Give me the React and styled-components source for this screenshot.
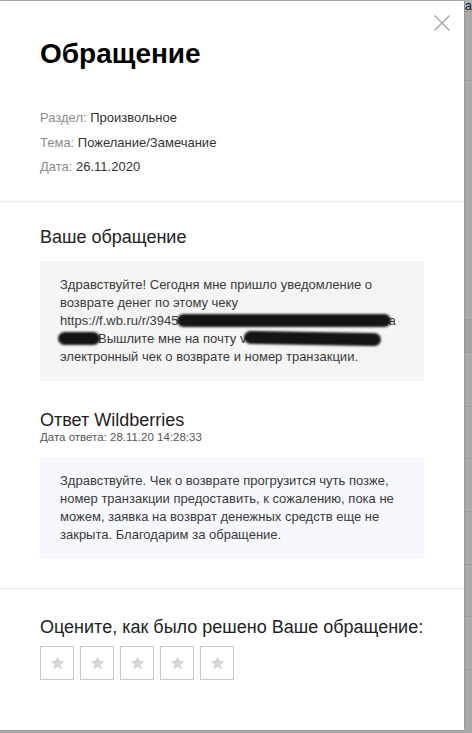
import styled, { createGlobalStyle } from 'styled-components'

const GlobalStyle = createGlobalStyle`
    html, body {
        margin: 0;
        padding: 0;
        overflow: hidden;
    }
    body {
        font-family: 'Liberation Sans', Arial, sans-serif;
        background: #a9a9a9;
    }
`

const backRows = [
    { h: 12, light: true, text: 'la' },
    { h: 69 },
    { h: 239 },
    { h: 33, band: true },
    { h: 54 },
    { h: 52 },
    { h: 53 },
    { h: 53 },
    { h: 52 },
    { h: 53 },
    { h: 70 },
]

function Star() {
    return (
        <svg width='15' height='14' viewBox='0 0 24 23'>
            <polygon
                points='12,0.8 15.3,8 23.2,8.6 17.2,13.8 19,21.6 12,17.5 5,21.6 6.8,13.8 0.8,8.6 8.7,8'
                fill='#d6d6d6'
            />
        </svg>
    )
}

function CloseIcon() {
    return (
        <svg width='16' height='16' viewBox='0 0 16 16'>
            <path d='M0.5 0.5 L15.5 15.5 M15.5 0.5 L0.5 15.5' stroke='#a3a3a3' strokeWidth='1.3' fill='none' />
        </svg>
    )
}

function App() {
    return (
        <>
            <GlobalStyle />
            <Page>
                <Backdrop>
                    {backRows.map((row, i) => (
                        <BackRow key={i} $h={row.h} $light={row.light} $band={row.band}>
                            {row.text}
                        </BackRow>
                    ))}
                    <BackText>
                        <span>Т</span>
                        <span>ı</span>
                        <span>ı</span>
                        <span>WW</span>
                    </BackText>
                </Backdrop>

                <Modal>
                    <CloseButton aria-label='Закрыть'>
                        <CloseIcon />
                    </CloseButton>

                    <Header>
                        <Title>Обращение</Title>
                        <Meta>
                            <MetaRow>
                                <Label>Раздел:</Label> Произвольное
                            </MetaRow>
                            <MetaRow>
                                <Label>Тема:</Label> Пожелание/Замечание
                            </MetaRow>
                            <MetaRow>
                                <Label>Дата:</Label> 26.11.2020
                            </MetaRow>
                        </Meta>
                    </Header>

                    <Section $pt={23} $pb={29}>
                        <Heading>Ваше обращение</Heading>
                        <MessageBox $bg='#f5f5f5' $mt={12}>
                            Здравствуйте! Сегодня мне пришло уведомление о возврате денег по этому чеку
                            <br />
                            https://f.wb.ru/r/3945
                            <Redact $w={214} />a
                            <br />
                            <Redact $w={42} />
                            Вышлите мне на почту v<Redact $w={137} $tilt /> электронный чек о возврате и номер
                            транзакции.
                        </MessageBox>

                        <AnswerHead>
                            <Heading $lh={20}>Ответ Wildberries</Heading>
                            <AnswerDate>Дата ответа: 28.11.20 14:28:33</AnswerDate>
                        </AnswerHead>
                        <MessageBox $bg='#f7f8fd' $mt={13}>
                            Здравствуйте. Чек о возврате прогрузится чуть позже, номер транзакции предоставить, к
                            сожалению, пока не можем, заявка на возврат денежных средств еще не закрыта. Благодарим
                            за обращение.
                        </MessageBox>
                    </Section>

                    <Section $pt={26} $pb={49} $last>
                        <Heading>Оцените, как было решено Ваше обращение:</Heading>
                        <Stars>
                            {[1, 2, 3, 4, 5].map((n) => (
                                <StarButton key={n} aria-label={`Оценка ${n}`}>
                                    <Star />
                                </StarButton>
                            ))}
                        </Stars>
                    </Section>
                </Modal>
            </Page>
        </>
    )
}

const Page = styled.div`
    position: relative;
    width: 100%;
    height: 733px;
    overflow: hidden;
    background: #a9a9a9;
`

const Backdrop = styled.div`
    display: flex;
    flex-direction: column;
`

const BackRow = styled.div`
    height: ${({ $h }) => $h}px;
    box-sizing: border-box;
    border-bottom: 1px solid #9c9c9c;
    background: ${({ $light, $band }) => ($light ? '#b4b4b4' : $band ? '#a4a4a4' : '#a9a9a9')};
    display: flex;
    justify-content: flex-end;
    align-items: flex-start;
    font-size: 13px;
    line-height: 11px;
    color: #1a1a3a;
    overflow: hidden;
`

const BackText = styled.div`
    display: flex;
    gap: 70px;
    padding-left: 192px;
    margin-top: -4px;
    font-size: 14px;
    font-weight: bold;
    color: #1c1c1c;
`

const Modal = styled.div`
    position: absolute;
    left: 0;
    top: 1px;
    width: 464px;
    height: 729px;
    background: #fff;
    box-shadow: 0 0 2px rgba(0, 0, 0, 0.25);
    box-sizing: border-box;
    display: flex;
    flex-direction: column;
`

const CloseButton = styled.button`
    position: absolute;
    top: 14px;
    right: 14px;
    width: 16px;
    height: 16px;
    padding: 0;
    border: none;
    background: none;
    display: flex;
    cursor: pointer;
`

const Header = styled.header`
    padding: 36px 40px 21px;
    border-bottom: 1px solid #ececec;
`

const Title = styled.h1`
    margin: 0;
    font-size: 28px;
    line-height: 34px;
    font-weight: bold;
    color: #000;
`

const Meta = styled.div`
    margin-top: 35px;
    display: flex;
    flex-direction: column;
`

const MetaRow = styled.div`
    font-size: 13px;
    line-height: 24.5px;
    color: #333;
`

const Label = styled.span`
    color: #8c8c8c;
`

const Section = styled.section`
    padding: ${({ $pt }) => $pt}px 40px ${({ $pb }) => $pb}px;
    border-bottom: ${({ $last }) => ($last ? 'none' : '1px solid #ececec')};
`

const Heading = styled.h2`
    margin: 0;
    font-size: 18px;
    line-height: ${({ $lh }) => $lh || 24}px;
    font-weight: normal;
    color: #222;
`

const MessageBox = styled.div`
    margin-top: ${({ $mt }) => $mt}px;
    padding: 15px 20px;
    background: ${({ $bg }) => $bg};
    font-size: 13px;
    line-height: 18px;
    color: #3a3a3a;
`

const Redact = styled.span`
    display: inline-block;
    width: ${({ $w }) => $w}px;
    height: 13px;
    margin: 0 -2px;
    vertical-align: -2px;
    border-radius: 7px;
    background: #141414;
    filter: blur(1px);
    transform: ${({ $tilt }) => ($tilt ? 'rotate(1deg)' : 'none')};
`

const AnswerHead = styled.div`
    margin-top: 29px;
    display: flex;
    flex-direction: column;
`

const AnswerDate = styled.div`
    font-size: 11.5px;
    line-height: 14px;
    color: #555;
`

const Stars = styled.div`
    margin-top: 7px;
    display: flex;
    gap: 6px;
`

const StarButton = styled.button`
    width: 34px;
    height: 34px;
    padding: 0;
    box-sizing: border-box;
    border: 1px solid #c9c9c9;
    background: #fff;
    display: flex;
    align-items: center;
    justify-content: center;
    cursor: pointer;
`

export default App
